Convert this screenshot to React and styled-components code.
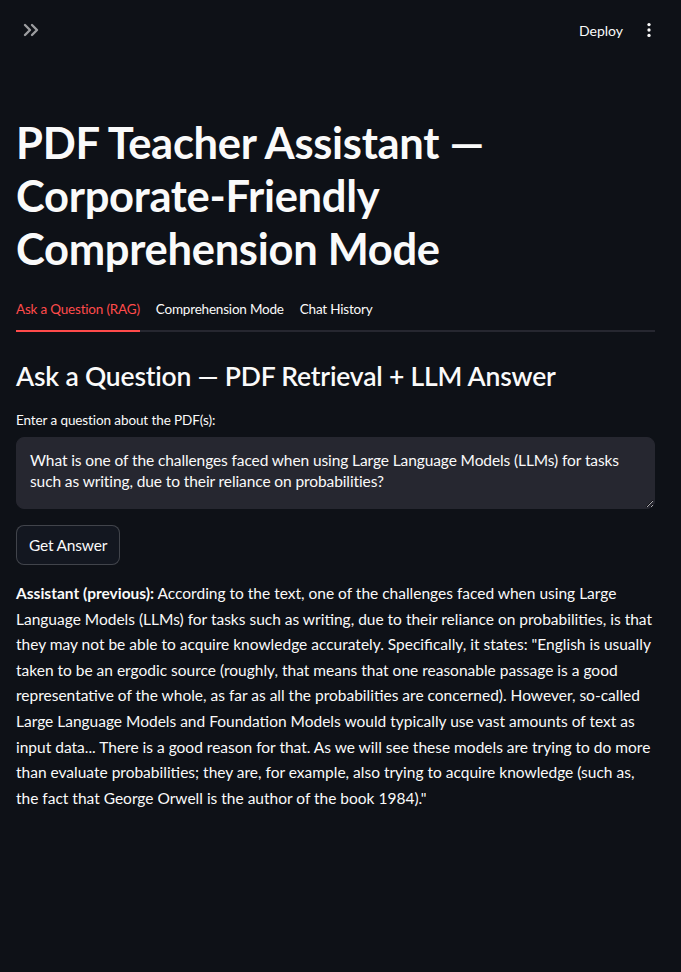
import React from 'react';
import styled, { createGlobalStyle } from 'styled-components';

const GlobalStyle = createGlobalStyle`
  html, body {
    margin: 0;
    padding: 0;
    background: #0e1117;
  }
  body {
    font-family: Lato, "Liberation Sans", sans-serif;
    color: #fafafa;
    -webkit-font-smoothing: antialiased;
  }
  * { box-sizing: border-box; }
`;

const Page = styled.div`
  min-height: 972px;
  background: #0e1117;
`;

const Header = styled.header`
  height: 60px;
  display: flex;
  align-items: center;
  justify-content: space-between;
  padding: 0 20px 0 18px;
`;

const IconButton = styled.button`
  background: none;
  border: none;
  padding: 2px;
  display: flex;
  align-items: center;
  justify-content: center;
  color: ${({ $muted }) => ($muted ? 'rgba(250,250,250,0.6)' : '#fafafa')};
  cursor: pointer;
`;

const HeaderActions = styled.div`
  display: flex;
  align-items: center;
  gap: 14px;
`;

const DeployLink = styled.span`
  font-size: 14px;
  color: #fafafa;
`;

const Main = styled.main`
  padding: 56px 26px 0 16px;
`;

const Title = styled.h1`
  margin: 0;
  font-size: 43.5px;
  font-weight: 700;
  line-height: 53px;
  letter-spacing: -0.3px;
`;

const TabBar = styled.div`
  margin-top: 18px;
  display: flex;
  gap: 16px;
  border-bottom: 2px solid #262730;
`;

const Tab = styled.div`
  font-size: 13.5px;
  padding: 8px 0 13px;
  margin-bottom: -2px;
  color: ${({ $active }) => ($active ? '#ff4b4b' : '#fafafa')};
  border-bottom: 2px solid ${({ $active }) => ($active ? '#ff4b4b' : 'transparent')};
  letter-spacing: -0.2px;
`;

const SectionTitle = styled.h3`
  margin: 26px 0 0;
  font-size: 26.5px;
  font-weight: 600;
  line-height: 36px;
  letter-spacing: -0.2px;
`;

const Label = styled.label`
  display: block;
  margin-top: 16px;
  font-size: 13.5px;
  line-height: 20px;
  letter-spacing: -0.1px;
`;

const TextArea = styled.textarea`
  display: block;
  width: 100%;
  height: 72px;
  margin-top: 7px;
  padding: 12px 13px;
  background: #262730;
  color: #fafafa;
  border: 1px solid #262730;
  border-radius: 8px;
  font-family: inherit;
  font-size: 15.5px;
  line-height: 21px;
  letter-spacing: -0.1px;
  resize: vertical;
  outline: none;
`;

const Button = styled.button`
  margin-top: 16px;
  height: 40px;
  padding: 0 12px;
  background: #131720;
  color: #fafafa;
  border: 1px solid rgba(250, 250, 250, 0.2);
  border-radius: 8px;
  font-family: inherit;
  font-size: 15.5px;
  letter-spacing: -0.2px;
  cursor: pointer;
`;

const Answer = styled.p`
  margin: 16px 0 0;
  font-size: 15.5px;
  line-height: 25.6px;
  letter-spacing: 0;
  b { font-weight: 700; }
`;

const ChevronsIcon = () => (
  <svg width="24" height="24" viewBox="0 0 24 24" fill="none" stroke="currentColor" strokeWidth="2.4" strokeLinecap="round" strokeLinejoin="round">
    <path d="M5 17l5-5-5-5" />
    <path d="M12 17l5-5-5-5" />
  </svg>
);

const DotsIcon = () => (
  <svg width="20" height="20" viewBox="0 0 24 24" fill="currentColor">
    <circle cx="12" cy="5.5" r="2" />
    <circle cx="12" cy="12" r="2" />
    <circle cx="12" cy="18.5" r="2" />
  </svg>
);

const question =
  'What is one of the challenges faced when using Large Language Models (LLMs) for tasks such as writing, due to their reliance on probabilities?';

export default function App() {
  return (
    <Page>
      <GlobalStyle />
      <Header>
        <IconButton $muted aria-label="Expand sidebar">
          <ChevronsIcon />
        </IconButton>
        <HeaderActions>
          <DeployLink>Deploy</DeployLink>
          <IconButton aria-label="Main menu">
            <DotsIcon />
          </IconButton>
        </HeaderActions>
      </Header>
      <Main>
        <Title>PDF Teacher Assistant — Corporate-Friendly Comprehension Mode</Title>
        <TabBar>
          <Tab $active>Ask a Question (RAG)</Tab>
          <Tab>Comprehension Mode</Tab>
          <Tab>Chat History</Tab>
        </TabBar>
        <SectionTitle>Ask a Question — PDF Retrieval + LLM Answer</SectionTitle>
        <Label>Enter a question about the PDF(s):</Label>
        <TextArea defaultValue={question} />
        <Button>Get Answer</Button>
        <Answer>
          <b>Assistant (previous):</b> According to the text, one of the challenges faced when using Large
          Language Models (LLMs) for tasks such as writing, due to their reliance on probabilities, is that
          they may not be able to acquire knowledge accurately. Specifically, it states: "English is usually
          taken to be an ergodic source (roughly, that means that one reasonable passage is a good
          representative of the whole, as far as all the probabilities are concerned). However, so-called
          Large Language Models and Foundation Models would typically use vast amounts of text as input
          data... There is a good reason for that. As we will see these models are trying to do more than
          evaluate probabilities; they are, for example, also trying to acquire knowledge (such as, the fact
          that George Orwell is the author of the book 1984)."
        </Answer>
      </Main>
    </Page>
  );
}
